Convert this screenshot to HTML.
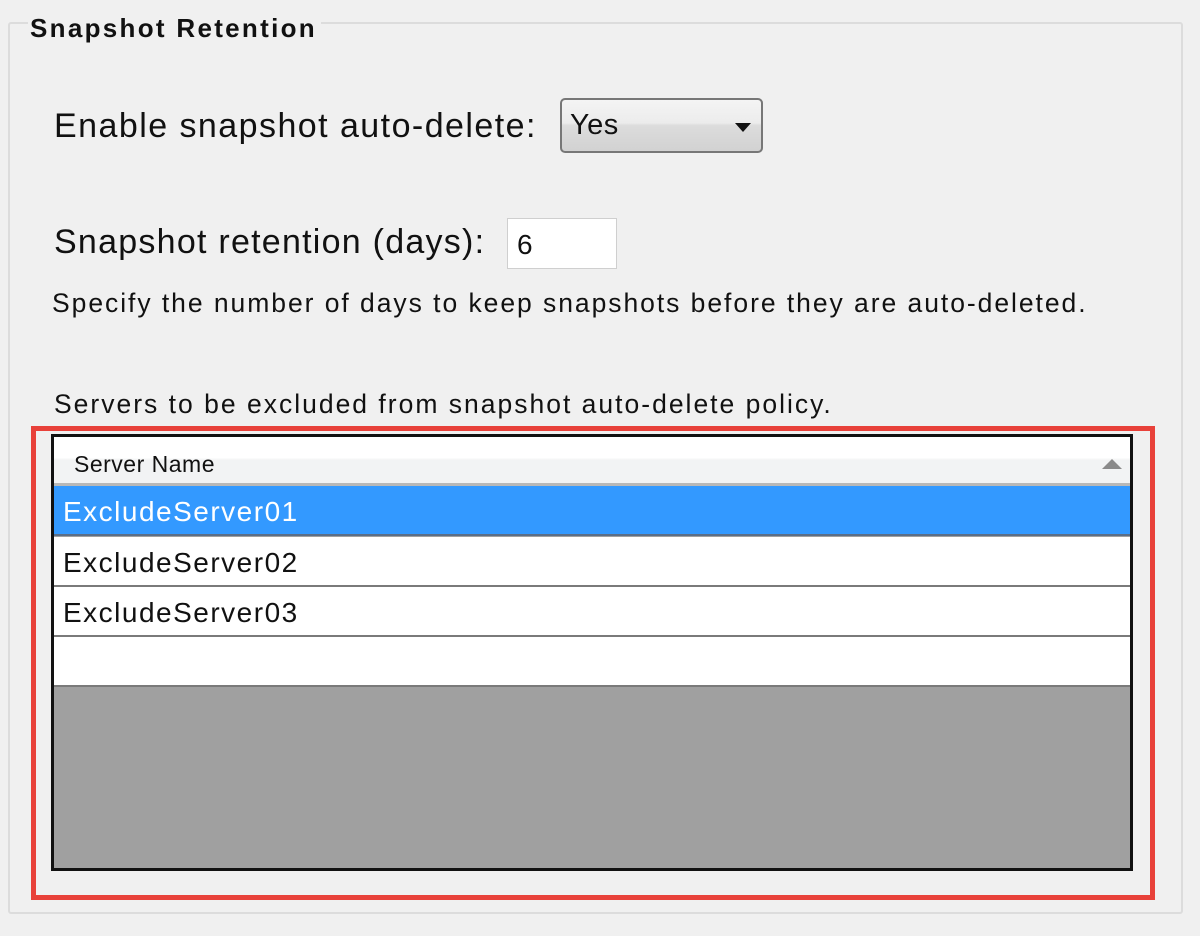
<!DOCTYPE html>
<html><head><meta charset="utf-8"><style>
*{margin:0;padding:0;box-sizing:border-box}
body{width:1200px;height:936px;background:#f0f0f0;font-family:"Liberation Sans",Arial,sans-serif;position:relative;overflow:hidden;color:#111}
.abs{position:absolute}
.grp{left:8px;top:22px;width:1175px;height:892px;border:2px solid #dcdcdc;border-radius:3px}
.title{left:28px;top:13px;font-size:26px;font-weight:bold;background:#f0f0f0;padding:0 4px 0 2px;letter-spacing:2.3px}
.lbl{font-size:34px;white-space:nowrap}
.small{font-size:26.5px;white-space:nowrap}
.combo{left:560px;top:98px;width:203px;height:55px;border:2px solid #777;border-radius:5px;background:linear-gradient(#f4f4f4 0%,#ececec 45%,#dcdcdc 50%,#d2d2d2 100%);font-size:29px;padding:9px 0 0 8px;letter-spacing:0.5px}
.arrow{position:absolute;right:10px;top:23px;width:0;height:0;border-left:8px solid transparent;border-right:8px solid transparent;border-top:9px solid #111}
.tb{left:507px;top:218px;width:110px;height:51px;background:#fff;border:1px solid #cfcfcf;font-size:28px;padding:10px 0 0 9px}
.red{left:31px;top:426px;width:1124px;height:474px;border:5px solid #e8413a}
.list{left:51px;top:434px;width:1082px;height:437px;border:3px solid #111;background:#a0a0a0}
.hdr{left:0;top:0;width:1076px;height:49px;background:linear-gradient(#fff 0%,#fff 45%,#f2f3f4 50%,#f2f3f4 100%);border-bottom:3px solid #b8b8b8;font-size:23px;padding:14px 0 0 20px;letter-spacing:0.5px}
.tri{position:absolute;right:8px;top:22px;width:0;height:0;border-left:10px solid transparent;border-right:10px solid transparent;border-bottom:10px solid #8a8a8a}
.row{left:0;width:1076px;height:50px;background:#fff;border-bottom:2px solid #7a7a7a;font-size:28px;padding:10px 0 0 9px;letter-spacing:1.5px}
.sel{background:#3399ff;color:#fff;border-bottom:2px solid #5a6e88}
</style></head><body>
<div class="abs grp"></div>
<div class="abs title">Snapshot Retention</div>
<div class="abs lbl" style="left:54px;top:107px;letter-spacing:1.45px">Enable snapshot auto-delete:</div>
<div class="abs combo">Yes<div class="arrow"></div></div>
<div class="abs lbl" style="left:54px;top:223px;letter-spacing:1.25px">Snapshot retention (days):</div>
<div class="abs tb">6</div>
<div class="abs small" style="left:52px;top:288px;letter-spacing:1.95px">Specify the number of days to keep snapshots before they are auto-deleted.</div>
<div class="abs small" style="left:54px;top:389px;letter-spacing:2.0px">Servers to be excluded from snapshot auto-delete policy.</div>
<div class="abs red"></div>
<div class="abs list">
<div class="abs hdr">Server Name<div class="tri"></div></div>
<div class="abs row sel" style="top:49px">ExcludeServer01</div>
<div class="abs row" style="top:100px">ExcludeServer02</div>
<div class="abs row" style="top:150px">ExcludeServer03</div>
<div class="abs row" style="top:200px"></div>
</div>
</body></html>
